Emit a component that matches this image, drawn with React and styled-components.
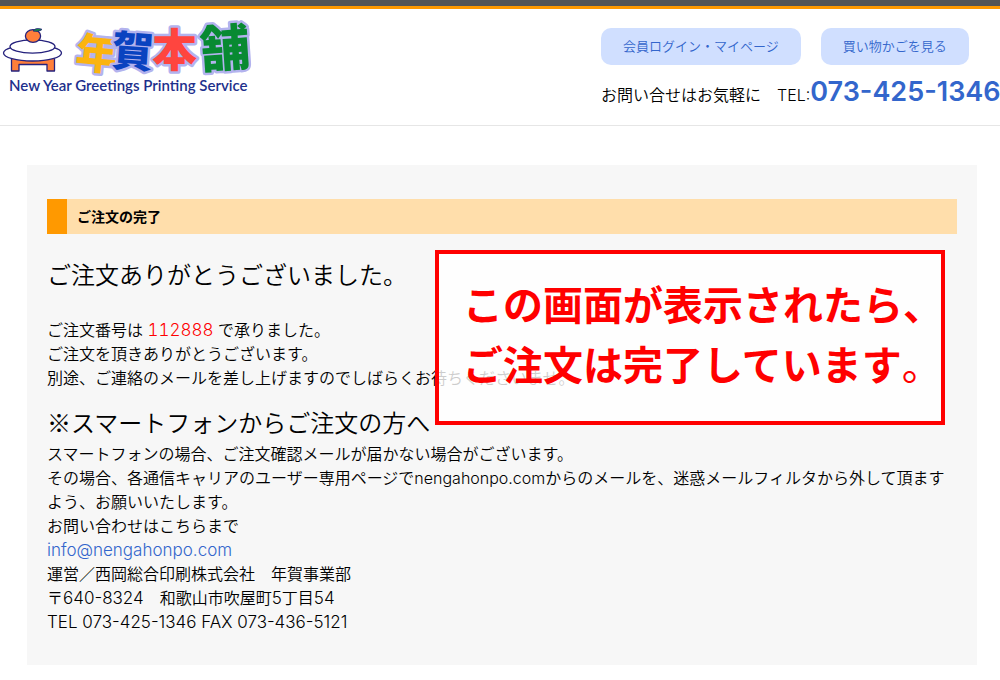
import React from "react";
import styled, { createGlobalStyle } from "styled-components";

const GlobalStyle = createGlobalStyle`
  * { box-sizing: border-box; }
  body {
    margin: 0;
    background: #fff;
    color: #000;
    font-family: Inter, "Noto Sans CJK JP", sans-serif;
    font-size: 16px;
    font-weight: 350;
    line-height: 24px;
  }
  a { color: #36c; text-decoration: none; }
`;

const Header = styled.header`
  display: flex;
  justify-content: space-between;
  align-items: flex-start;
  min-height: 126px;
  border-top: 6px solid #555;
  border-bottom: 1px solid #e6e6e6;
  box-shadow: inset 0 3px #f90;
`;

const LogoLink = styled.a`
  display: block;
  padding-top: 12px;
  svg { display: block; }
`;

const Glyph = styled.text`
  font-family: "Noto Sans CJK JP", sans-serif;
  font-weight: 900;
  font-size: ${(p) => p.$size}px;
  fill: ${(p) => p.$color};
  stroke: #b3b3ee;
  stroke-width: 5px;
  stroke-linejoin: round;
  paint-order: stroke;
`;

const Tagline = styled.text`
  font-family: Lato, sans-serif;
  font-weight: 600;
  font-size: 15px;
  fill: #1d2f8c;
`;

const Contact = styled.div`
  display: flex;
  flex-direction: column;
  gap: 9px;
  width: 399px;
  padding-top: 22px;
`;

const Actions = styled.nav`
  display: flex;
  gap: 20px;
`;

const PillLink = styled.a`
  padding: 0 22px;
  border-radius: 10px;
  background: #d0dfff;
  font-size: 13px;
  line-height: 37px;
  white-space: nowrap;
`;

const Phone = styled.p`
  margin: 0;
  line-height: 36px;
  white-space: nowrap;
`;

const Latin = styled.span`
  font-size: 17px;
  line-height: 1;
`;

const PhoneNumber = styled.strong`
  color: #36c;
  font-size: 27px;
  font-weight: 600;
`;

const Card = styled.main`
  position: relative;
  margin: 39px 23px 15px 27px;
  padding: 34px 20px 31px;
  background: #f7f7f7;
`;

const Title = styled.h1`
  margin: 0 0 24px;
  padding-left: 10px;
  border-left: 20px solid #f90;
  background: #ffdeab;
  font-size: 14px;
  font-weight: 700;
  line-height: 35px;
`;

const Heading = styled.h2`
  margin: 0 0 ${(p) => p.$gap || 0}px;
  font-size: 24px;
  font-weight: 350;
  line-height: 36px;
`;

const NoteMark = styled.span`
  font-family: "Noto Sans CJK JP", sans-serif;
  line-height: 1;
`;

const Text = styled.p`
  margin: 0 0 ${(p) => p.$gap || 0}px;
`;

const OrderNumber = styled(Latin)`
  color: #f00;
  font-variant-numeric: tabular-nums;
`;

const Notice = styled.aside`
  position: absolute;
  top: 85px;
  right: 32px;
  width: 510px;
  padding: 22px 0 25px 24px;
  border: 4px solid #f00;
  background: rgba(255, 255, 255, 0.8);
  color: #f00;
  font-size: 40px;
  font-weight: 700;
  line-height: 60px;
  white-space: nowrap;
`;

const Stop = styled.span`
  font-weight: 400;
`;

const glyphs = [
  { char: "年", x: 76, y: 51, size: 42, color: "#fbb40f", turn: 5 },
  { char: "賀", x: 112, y: 49, size: 42, color: "#0a43c0", turn: 4 },
  { char: "本", x: 152, y: 49, size: 45, color: "#ff453f", turn: 0 },
  { char: "舗", x: 200, y: 49, size: 50, color: "#088a32", turn: -4 },
];

function Logo() {
  return (
    <svg width="260" height="84" viewBox="0 0 260 84">
      <g stroke="#25227d" strokeWidth="1.3" strokeLinejoin="round">
        <path d="M11.5 39H54.5V53H47V46.5H19V53H11.5Z" fill="#ff7f3a" />
        <path d="M25 42h16" strokeWidth="2.2" />
        <ellipse cx="32.5" cy="35" rx="29" ry="8" fill="#fff" />
        <ellipse cx="32.5" cy="28.5" rx="22.5" ry="6.6" fill="#fff" />
        <ellipse cx="33" cy="18" rx="7.6" ry="6.3" fill="#ff7f3a" />
        <path d="M33 13c2-3 6-3 9-1.6c-2 2-6 2.4-9 1.6z" fill="#168447" strokeWidth="0.8" />
      </g>
      {glyphs.map((g) => (
        <Glyph
          key={g.char}
          x={g.x}
          y={g.y}
          $size={g.size}
          $color={g.color}
          transform={`rotate(${g.turn} ${g.x + 20} ${g.y - 18})`}
        >
          {g.char}
        </Glyph>
      ))}
      <Tagline x="9" y="73">New Year Greetings Printing Service</Tagline>
    </svg>
  );
}

export default function App() {
  return (
    <>
      <GlobalStyle />
      <Header>
        <LogoLink href="#" aria-label="年賀本舗">
          <Logo />
        </LogoLink>
        <Contact>
          <Actions>
            <PillLink href="#mypage">会員ログイン・マイページ</PillLink>
            <PillLink href="#cart">買い物かごを見る</PillLink>
          </Actions>
          <Phone>
            お問い合せはお気軽に　TEL:<PhoneNumber>073-425-1346</PhoneNumber>
          </Phone>
        </Contact>
      </Header>
      <Card>
        <Title>ご注文の完了</Title>
        <Heading $gap={24}>ご注文ありがとうございました。</Heading>
        <Text $gap={16}>
          ご注文番号は <OrderNumber>112888</OrderNumber> で承りました。
          <br />
          ご注文を頂きありがとうございます。
          <br />
          別途、ご連絡のメールを差し上げますのでしばらくお待ちくださいませ。
        </Text>
        <Heading>
          <NoteMark>※</NoteMark>スマートフォンからご注文の方へ
        </Heading>
        <Text>
          スマートフォンの場合、ご注文確認メールが届かない場合がございます。
          <br />
          その場合、各通信キャリアのユーザー専用ページでnengahonpo.comからのメールを、迷惑メールフィルタから外して頂ますよう、お願いいたします。
          <br />
          お問い合わせはこちらまで
          <br />
          <Latin as="a" href="mailto:info@nengahonpo.com">info@nengahonpo.com</Latin>
          <br />
          運営／西岡総合印刷株式会社　年賀事業部
          <br />
          〒<Latin>640-8324</Latin>　和歌山市吹屋町<Latin>5</Latin>丁目<Latin>54</Latin>
          <br />
          <Latin>TEL 073-425-1346 FAX 073-436-5121</Latin>
        </Text>
        <Notice>
          この画面が表示されたら、
          <br />
          ご注文は完了しています<Stop>。</Stop>
        </Notice>
      </Card>
    </>
  );
}
